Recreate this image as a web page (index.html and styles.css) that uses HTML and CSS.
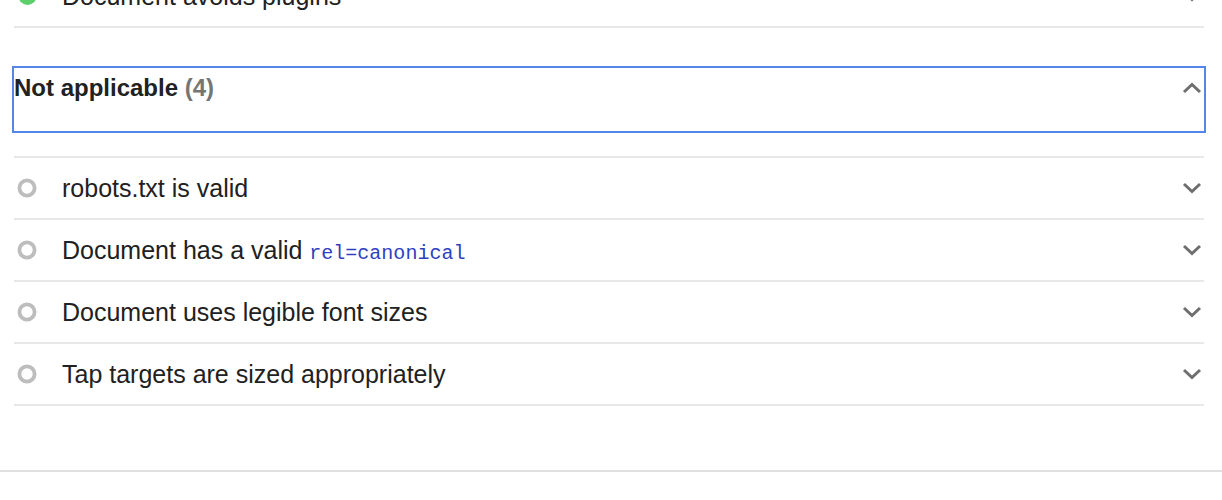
FILE: index.html
```html
<!DOCTYPE html>
<html>
<head>
<meta charset="utf-8">
<link rel="stylesheet" href="styles.css">
</head>
<body>
<div class="page">
  <div class="group">
    <div class="prev">
      <div class="row row-clip">
        <span class="icon"><svg width="20" height="20" viewBox="0 0 20 20"><circle cx="10.5" cy="10" r="9" fill="#5fcf6c"/></svg></span>
        <span class="title">Document avoids plugins</span>
        <span class="chev"><svg width="20" height="12" viewBox="0 0 20 12"><polyline points="2,2 10,9.5 18,2" fill="none" stroke="#6e6e6e" stroke-width="3"/></svg></span>
      </div>
    </div>

    <div class="section">
      <div class="summary">
        <span class="heading">Not applicable <span class="count">(4)</span></span>
        <span class="chev"><svg width="20" height="12" viewBox="0 0 20 12"><polyline points="2,10 10,2.5 18,10" fill="none" stroke="#6e6e6e" stroke-width="3"/></svg></span>
      </div>

      <div class="list">
        <div class="row">
          <span class="icon"><svg width="20" height="20" viewBox="0 0 20 20"><circle cx="10" cy="10" r="7.6" fill="none" stroke="#bdbdbd" stroke-width="3.8"/></svg></span>
          <span class="title">robots.txt is valid</span>
          <span class="chev"><svg width="20" height="12" viewBox="0 0 20 12"><polyline points="2,2 10,9.5 18,2" fill="none" stroke="#6e6e6e" stroke-width="3"/></svg></span>
        </div>
        <div class="row">
          <span class="icon"><svg width="20" height="20" viewBox="0 0 20 20"><circle cx="10" cy="10" r="7.6" fill="none" stroke="#bdbdbd" stroke-width="3.8"/></svg></span>
          <span class="title">Document has a valid <code class="code">rel=canonical</code></span>
          <span class="chev"><svg width="20" height="12" viewBox="0 0 20 12"><polyline points="2,2 10,9.5 18,2" fill="none" stroke="#6e6e6e" stroke-width="3"/></svg></span>
        </div>
        <div class="row">
          <span class="icon"><svg width="20" height="20" viewBox="0 0 20 20"><circle cx="10" cy="10" r="7.6" fill="none" stroke="#bdbdbd" stroke-width="3.8"/></svg></span>
          <span class="title">Document uses legible font sizes</span>
          <span class="chev"><svg width="20" height="12" viewBox="0 0 20 12"><polyline points="2,2 10,9.5 18,2" fill="none" stroke="#6e6e6e" stroke-width="3"/></svg></span>
        </div>
        <div class="row">
          <span class="icon"><svg width="20" height="20" viewBox="0 0 20 20"><circle cx="10" cy="10" r="7.6" fill="none" stroke="#bdbdbd" stroke-width="3.8"/></svg></span>
          <span class="title">Tap targets are sized appropriately</span>
          <span class="chev"><svg width="20" height="12" viewBox="0 0 20 12"><polyline points="2,2 10,9.5 18,2" fill="none" stroke="#6e6e6e" stroke-width="3"/></svg></span>
        </div>
      </div>
    </div>
  </div>
  <div class="footer-line"></div>
</div>
</body>
</html>
```

FILE: styles.css
```css
html, body {
  margin: 0;
  padding: 0;
  background: #ffffff;
}

.page {
  font-family: "Liberation Sans", Arial, Helvetica, sans-serif;
  color: #212121;
  width: 1222px;
}

.group {
  padding: 0 18px 0 14px;
}

.prev {
  height: 26px;
  display: flex;
  align-items: flex-end;
  overflow: hidden;
  border-bottom: 2px solid #e8e8e8;
}

.row {
  display: flex;
  align-items: center;
  height: 60px;
  font-size: 25px;
}

.row-clip {
  flex: 1 1 auto;
  flex-shrink: 0;
}

.icon {
  width: 20px;
  height: 20px;
  margin-left: 3px;
  display: flex;
}

.title {
  margin-left: 25px;
  flex: 1;
  white-space: nowrap;
}

.code {
  font-family: "Liberation Mono", "Courier New", monospace;
  font-size: 20px;
  color: #2f3fc2;
}

.chev {
  display: flex;
  width: 20px;
  height: 12px;
  margin-right: 2px;
}

.section {
  margin-top: 40px;
}

.summary {
  display: flex;
  height: 63px;
  box-sizing: border-box;
  padding-top: 6px;
  align-items: flex-start;
  outline: 2px solid #5486e8;
}

.heading {
  flex: 1;
  font-size: 24px;
  font-weight: bold;
  line-height: 28px;
}

.summary .chev {
  margin-top: 8px;
}

.count {
  color: #757575;
}

.list {
  margin-top: 25px;
  border-top: 2px solid #e8e8e8;
}

.list .row {
  border-bottom: 2px solid #e8e8e8;
}

.footer-line {
  margin-top: 64px;
  height: 2px;
  background: #e0e0e0;
}
```
